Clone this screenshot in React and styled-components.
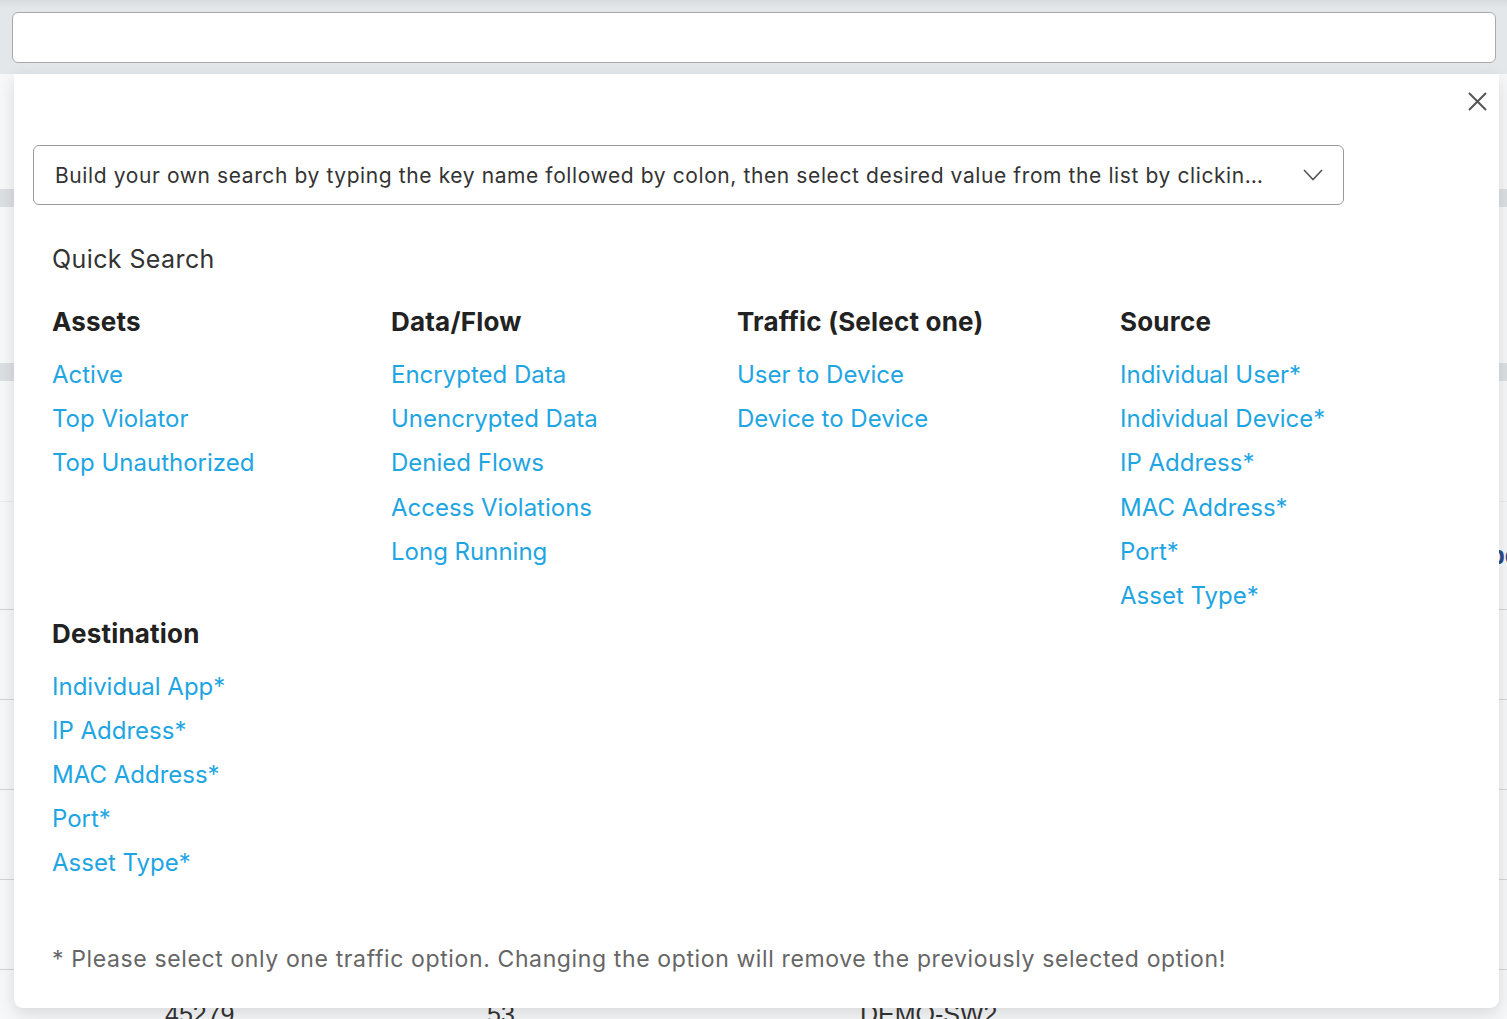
import React from 'react';
import styled, { createGlobalStyle } from 'styled-components';

const GlobalStyle = createGlobalStyle`
  html, body {
    margin: 0;
    padding: 0;
    background: #f7f8f9;
    font-family: Inter, "Noto Sans", sans-serif;
    overflow: hidden;
  }
`;

const Page = styled.div`
  position: relative;
  width: 1507px;
  height: 1019px;
  overflow: hidden;
`;

const Header = styled.div`
  height: 74px;
  box-sizing: border-box;
  padding: 12px 11px 11px 12px;
  background: linear-gradient(#d9dcdf 0px, #e4e7ea 8px, #e4e7ea 100%);
`;

const TopInput = styled.div`
  height: 51px;
  box-sizing: border-box;
  background: #fff;
  border: 1px solid #aaaaaa;
  border-radius: 6px;
`;

const Body = styled.div`
  display: flex;
  flex-direction: column;
`;

const GrayBar = styled.div`
  height: 18px;
  margin-top: ${p => p.$top}px;
  background: #dde0e3;
`;

const Row = styled.div`
  height: ${p => p.$h}px;
  box-sizing: border-box;
  border-bottom: 1px solid ${p => (p.$light ? '#ececec' : '#d4d4d4')};
  display: flex;
  align-items: center;
  font-family: "Liberation Sans", Arial, sans-serif;
  font-size: 25px;
  color: #333;
  position: relative;
`;

const Cell = styled.span`
  position: absolute;
  left: ${p => p.$x}px;
`;

const LinkCell = styled(Cell)`
  color: #2b4a8b;
  font-weight: bold;
`;

const Panel = styled.div`
  position: absolute;
  top: 74px;
  left: 14px;
  width: 1485px;
  height: 934px;
  box-sizing: border-box;
  background: #fff;
  border-radius: 0 0 9px 9px;
  box-shadow: 0 6px 18px rgba(0, 0, 0, 0.13);
  padding: 71px 19px 0 19px;
  display: flex;
  flex-direction: column;
`;

const CloseButton = styled.button`
  position: absolute;
  top: 17px;
  right: 10px;
  width: 22px;
  height: 22px;
  padding: 0;
  border: none;
  background: none;
  cursor: pointer;
`;

const SearchSelect = styled.div`
  width: 1311px;
  height: 60px;
  box-sizing: border-box;
  border: 1px solid #9a9a9a;
  border-radius: 6px;
  display: flex;
  align-items: center;
  padding: 0 20px 0 21px;
  gap: 28px;
`;

const SearchText = styled.span`
  flex: 1;
  min-width: 0;
  font-size: 21px;
  letter-spacing: 0.6px;
  color: #333;
  white-space: nowrap;
  overflow: hidden;
  text-overflow: ellipsis;
`;

const Content = styled.div`
  padding-left: 19px;
  display: flex;
  flex-direction: column;
`;

const QuickTitle = styled.div`
  margin-top: 39px;
  font-size: 25px;
  line-height: 30px;
  letter-spacing: 0.4px;
  color: #333;
`;

const GroupRow = styled.div`
  display: flex;
  margin-top: ${p => p.$top}px;
`;

const Group = styled.div`
  display: flex;
  flex-direction: column;
  width: ${p => p.$w}px;
`;

const GroupTitle = styled.div`
  font-size: 26px;
  font-weight: 700;
  line-height: 32px;
  letter-spacing: 0.2px;
  color: #222;
  margin-bottom: 15px;
`;

const QuickLink = styled.a`
  font-size: 24px;
  line-height: ${p => p.$lh}px;
  color: #1ea5e2;
  text-decoration: none;
  cursor: pointer;
  white-space: nowrap;
`;

const Note = styled.div`
  margin-top: 59px;
  font-size: 23px;
  line-height: 30px;
  color: #666;
  letter-spacing: 0.62px;
`;

const groupsTop = [
  { title: 'Assets', w: 339, items: ['Active', 'Top Violator', 'Top Unauthorized'] },
  {
    title: 'Data/Flow',
    w: 346,
    items: ['Encrypted Data', 'Unencrypted Data', 'Denied Flows', 'Access Violations', 'Long Running'],
  },
  { title: 'Traffic (Select one)', w: 383, items: ['User to Device', 'Device to Device'] },
  {
    title: 'Source',
    w: 340,
    items: ['Individual User*', 'Individual Device*', 'IP Address*', 'MAC Address*', 'Port*', 'Asset Type*'],
  },
];

const destination = {
  title: 'Destination',
  w: 339,
  items: ['Individual App*', 'IP Address*', 'MAC Address*', 'Port*', 'Asset Type*'],
};

function LinkGroup({ group, lineHeight }) {
  return (
    <Group $w={group.w}>
      <GroupTitle>{group.title}</GroupTitle>
      {group.items.map(item => (
        <QuickLink key={item} $lh={lineHeight}>
          {item}
        </QuickLink>
      ))}
    </Group>
  );
}

export default function App() {
  return (
    <Page>
      <GlobalStyle />
      <Header>
        <TopInput />
      </Header>
      <Body>
        <GrayBar $top={115} />
        <GrayBar $top={156} />
        <Row $h={121} $light />
        <Row $h={108}>
          <LinkCell $x={1470}>Open</LinkCell>
        </Row>
        <Row $h={90} />
        <Row $h={90} />
        <Row $h={90} />
        <Row $h={90} />
        <Row $h={90}>
          <Cell $x={165}>45279</Cell>
          <Cell $x={487}>53</Cell>
          <Cell $x={860}>DEMO-SW2</Cell>
        </Row>
      </Body>

      <Panel>
        <CloseButton aria-label="Close">
          <svg width="22" height="22" viewBox="0 0 22 22">
            <path d="M2 2 L19 19 M19 2 L2 19" stroke="#555" strokeWidth="2" fill="none" />
          </svg>
        </CloseButton>
        <SearchSelect>
          <SearchText>
            Build your own search by typing the key name followed by colon, then select desired value from the list by clicking on it
          </SearchText>
          <svg width="20" height="12" viewBox="0 0 20 12">
            <path d="M1 1 L10 10.5 L19 1" stroke="#555" strokeWidth="1.6" fill="none" />
          </svg>
        </SearchSelect>
        <Content>
          <QuickTitle>Quick Search</QuickTitle>
          <GroupRow $top={32}>
            {groupsTop.map(g => (
              <LinkGroup key={g.title} group={g} lineHeight={44.2} />
            ))}
          </GroupRow>
          <GroupRow $top={0}>
            <LinkGroup group={destination} lineHeight={44} />
          </GroupRow>
          <Note>
            * Please select only one traffic option. Changing the option will remove the previously selected option!
          </Note>
        </Content>
      </Panel>
    </Page>
  );
}
